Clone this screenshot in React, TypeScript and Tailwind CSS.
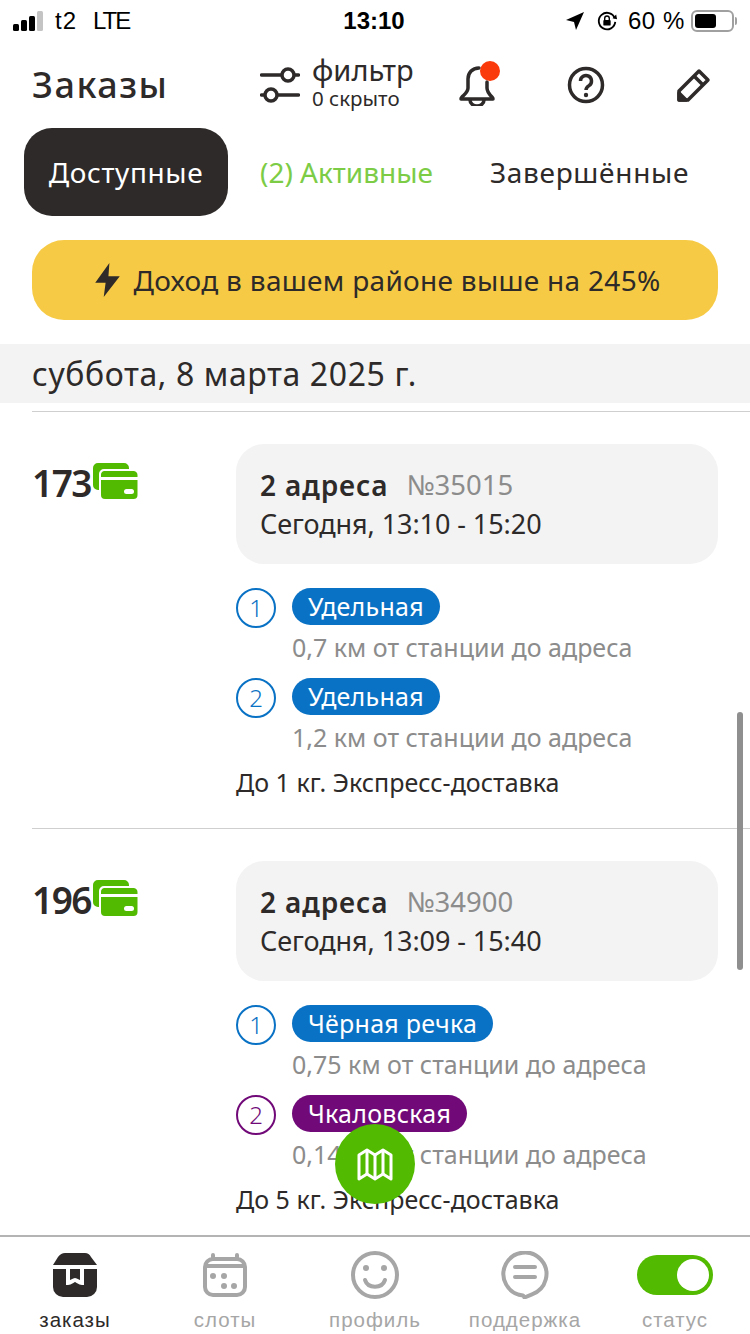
import React from "react";

const font = { fontFamily: '"Noto Sans", sans-serif' };

interface Stop {
  station: string;
  color: string;
  distance: string;
}

interface Order {
  price: string;
  addresses: string;
  id: string;
  time: string;
  stops: Stop[];
  note: string;
}

const BLUE = "#0a72c4";
const PURPLE = "#710a78";

const orders: Order[] = [
  {
    price: "173",
    addresses: "2 адреса",
    id: "№35015",
    time: "Сегодня, 13:10 - 15:20",
    stops: [
      { station: "Удельная", color: BLUE, distance: "0,7 км от станции до адреса" },
      { station: "Удельная", color: BLUE, distance: "1,2 км от станции до адреса" },
    ],
    note: "До 1 кг. Экспресс-доставка",
  },
  {
    price: "196",
    addresses: "2 адреса",
    id: "№34900",
    time: "Сегодня, 13:09 - 15:40",
    stops: [
      { station: "Чёрная речка", color: BLUE, distance: "0,75 км от станции до адреса" },
      { station: "Чкаловская", color: PURPLE, distance: "0,14 км от станции до адреса" },
    ],
    note: "До 5 кг. Экспресс-доставка",
  },
];

const CardsIcon = () => (
  <svg width="45" height="36" viewBox="0 0 45 36" className="shrink-0">
    <path d="M5 0h26a5 5 0 0 1 5 5v1H11a5 5 0 0 0-5 5v16H5a5 5 0 0 1-5-5V5a5 5 0 0 1 5-5z" fill="#52ba00" />
    <path d="M11 8h29a4 4 0 0 1 4.500 4v2H8v-2a4 4 0 0 1 3-4z" fill="#52ba00" />
    <path d="M8 17h36.500v15a4 4 0 0 1-4 4H12a4 4 0 0 1-4-4z" fill="#52ba00" />
    <rect x="31" y="26" width="10" height="5" rx="2.500" fill="#fff" />
  </svg>
);

const OrderRow = ({ order }: { order: Order }) => (
  <div className="flex h-[417px] border-t border-[#cfcfcf] ml-8 pt-8">
    <div className="w-[204px] shrink-0 flex items-start gap-[2px]">
      <span className="mt-[12px] text-[37px] leading-[54px] font-semibold text-[#2d2a29] tracking-[-1.5px]">{order.price}</span>
      <div className="mt-[19px]">
        <CardsIcon />
      </div>
    </div>
    <div className="w-[482px]">
      <div className="h-[120px] rounded-[28px] bg-[#f3f3f3] px-6 pt-[21px]">
        <div className="flex items-center gap-[18px] h-[40px]">
          <span className="text-[28px] tracking-[0.9px] font-semibold text-[#2d2a29]">{order.addresses}</span>
          <span className="text-[27.500px] text-[#8c8c8c]">{order.id}</span>
        </div>
        <div className="text-[27px] leading-[38px] text-[#2d2a29] tracking-[-0.07px]">{order.time}</div>
      </div>
      <div className="mt-6 flex flex-col gap-[18px]">
        {order.stops.map((stop, i) => (
          <div key={i} className="flex gap-4 h-[72px]">
            <div
              className="w-10 h-10 rounded-full border-[2.500px] flex items-center justify-center text-[24px] font-light"
              style={{ borderColor: stop.color, color: stop.color }}
            >
              {i + 1}
            </div>
            <div>
              <div
                className="inline-flex h-[37px] items-center rounded-full px-4 text-[25px] tracking-[0.25px] text-white"
                style={{ backgroundColor: stop.color }}
              >
                {stop.station}
              </div>
              <div className="text-[25px] leading-[33px] mt-[6px] text-[#8c8c8c] whitespace-nowrap">{stop.distance}</div>
            </div>
          </div>
        ))}
      </div>
      <div className="mt-[16px] text-[25px] leading-[33px] text-[#2d2a29] whitespace-nowrap">{order.note}</div>
    </div>
  </div>
);

const StatusBar = () => (
  <div className="h-[42px] shrink-0 flex items-center justify-between pl-[13px] pr-[13px] text-[24px] text-black" style={{ fontFamily: '"Liberation Sans", sans-serif' }}>
    <div className="flex items-center w-[260px]">
      <div className="flex items-end gap-[2px] h-[20px]">
        <span className="w-[6px] h-[7px] rounded-[1.500px] bg-black" />
        <span className="w-[6px] h-[11px] rounded-[1.500px] bg-black" />
        <span className="w-[6px] h-[15px] rounded-[1.500px] bg-black" />
        <span className="w-[6px] h-[20px] rounded-[1.500px] bg-[#c4c4c4]" />
      </div>
      <span className="ml-[12px] tracking-[1px]">t2</span>
      <span className="ml-[16px] tracking-[-2px]">LTE</span>
    </div>
    <span className="font-bold text-[24px] -ml-[2px]">13:10</span>
    <div className="flex items-center justify-end w-[260px]">
      <svg width="19" height="18" viewBox="0 0 19 18"><path d="M18 0 0 8l8 2 2 8z" fill="#000" /></svg>
      <svg width="22" height="22" viewBox="0 0 24 24" fill="none" className="ml-[11px]">
        <path d="M20.500 9A9 9 0 1 0 21 13" stroke="#000" strokeWidth="2" />
        <path d="m18 9 5 1-1-5z" fill="#000" />
        <rect x="8" y="11" width="8" height="6" rx="1" fill="#000" />
        <path d="M9.500 11V9a2.500 2.500 0 0 1 5 0v2" stroke="#000" strokeWidth="1.500" />
      </svg>
      <span className="ml-[10px] tracking-[0.6px]">60 %</span>
      <div className="ml-[6px] w-[43px] h-[22px] rounded-[6px] border-2 border-[#a0a0a0] p-[2px]">
        <div className="w-[21px] h-full rounded-[3px] bg-black" />
      </div>
      <span className="w-[2px] h-[8px] ml-[1px] rounded-r bg-[#a0a0a0]" />
    </div>
  </div>
);

const Header = () => (
  <div className="h-[86px] shrink-0 flex items-center pl-8 text-[#2d2a29]">
    <span className="text-[36px] font-medium w-[228px] tracking-[1.5px]">Заказы</span>
    <svg width="40" height="36" viewBox="0 0 40 36" fill="none" stroke="#2d2a29" strokeWidth="3.500">
      <path d="M1.500 8h37M1.500 28h37" strokeLinecap="round" />
      <circle cx="28" cy="8" r="6" fill="#fff" />
      <circle cx="11" cy="28" r="6" fill="#fff" />
    </svg>
    <div className="ml-[12px] w-[128px] -mt-[4px]">
      <div className="text-[29px] leading-[30px]">фильтр</div>
      <div className="text-[20.500px] leading-[26px]">0 скрыто</div>
    </div>
    <div className="ml-[18px] w-[40px] relative">
      <svg width="38" height="42" viewBox="0 0 38 42" fill="none" stroke="#2d2a29" strokeWidth="3.500" strokeLinecap="round" strokeLinejoin="round">
        <path d="M21 4C14 4 10 9 10 15v9c0 4-3 6-6 9-1 1-1 2-1 2h32s0-1-1-2c-3-3-5-5-5-9v-6" />
        <path d="M12 36a7 6 0 0 0 14 0" />
      </svg>
      <span className="absolute -top-[3px] left-[22px] w-[20px] h-[20px] rounded-full bg-[#fa3a0a]" />
    </div>
    <svg width="38" height="38" viewBox="0 0 38 38" fill="none" className="ml-[69px]">
      <circle cx="19" cy="19" r="16.500" stroke="#2d2a29" strokeWidth="3.500" />
      <path d="M13.500 15a5.500 5.500 0 1 1 8.500 4.600c-2 1.300-3 2.200-3 4.400" stroke="#2d2a29" strokeWidth="3.500" />
      <circle cx="19" cy="29" r="2.200" fill="#2d2a29" />
    </svg>
    <svg width="36" height="36" viewBox="0 0 36 36" fill="none" stroke="#2d2a29" strokeWidth="3.500" strokeLinejoin="round" className="ml-[71px]">
      <path d="M3 33v-9L23 4l9 9-20 20z" />
      <path d="m18 9 9 9" />
      <path d="M3 33v-7l7 7z" fill="#2d2a29" />
    </svg>
  </div>
);

const Tabs = () => (
  <div className="shrink-0 flex items-center h-[88px] pl-6 text-[28px]">
    <div className="w-[204px] h-[88px] rounded-[28px] bg-[#2d2a29] text-white flex items-center justify-center tracking-[0.6px]">Доступные</div>
    <span className="ml-8 text-[#7ccc46]">(2) Активные</span>
    <span className="ml-[57px] text-[#2d2a29] tracking-[0.7px]">Завершённые</span>
  </div>
);

const NavIcon = ({ name }: { name: string }) => {
  if (name === "orders")
    return (
      <svg width="44" height="44" viewBox="0 0 44 44">
        <path d="M12 0h20q4 0 6 4l6 8H0l5-8q3-4 7-4z" fill="#2d2a29" />
        <path d="M0 16h44v18a10 10 0 0 1-10 10H10A10 10 0 0 1 0 34z" fill="#2d2a29" />
        <path d="M15 16v14c3 0 5-3 7-3s4 3 7 3V16" stroke="#fff" strokeWidth="4" fill="none" />
      </svg>
    );
  if (name === "slots")
    return (
      <svg width="44" height="44" viewBox="0 0 44 44" fill="none" stroke="#a6a6a6" strokeWidth="4">
        <rect x="2" y="6" width="40" height="36" rx="8" />
        <path d="M2 13h40" />
        <path d="M10 2v4M34 2v4" strokeLinecap="round" />
        <g fill="#a6a6a6" stroke="none">
          <circle cx="10" cy="23" r="3" /><circle cx="21" cy="23" r="3" />
          <circle cx="21" cy="33" r="3" /><circle cx="31" cy="33" r="3" />
        </g>
      </svg>
    );
  if (name === "profile")
    return (
      <svg width="48" height="48" viewBox="0 0 48 48" fill="none" stroke="#a6a6a6" strokeWidth="4">
        <circle cx="24" cy="24" r="22" />
        <path d="M14 29c3 9 17 9 20 0" strokeLinecap="round" />
        <circle cx="15" cy="17" r="3" fill="#a6a6a6" stroke="none" />
        <circle cx="33" cy="17" r="3" fill="#a6a6a6" stroke="none" />
      </svg>
    );
  if (name === "support")
    return (
      <svg width="48" height="48" viewBox="0 0 48 48" fill="none" stroke="#a6a6a6" strokeWidth="4" strokeLinejoin="round">
        <path d="M22 44.400A21.500 21.500 0 1 1 31 43.300L23.500 46.500z" />
        <path d="M14 16h20M14 26h20" strokeLinecap="round" />
      </svg>
    );
  return (
    <div className="w-[76px] h-[40px] rounded-full bg-[#52ba00] flex items-center justify-end pr-[4px]">
      <span className="w-[32px] h-[32px] rounded-full bg-white" />
    </div>
  );
};

const navItems = [
  { name: "orders", label: "заказы", active: true },
  { name: "slots", label: "слоты", active: false },
  { name: "profile", label: "профиль", active: false },
  { name: "support", label: "поддержка", active: false },
  { name: "status", label: "статус", active: false },
];

const BottomNav = () => (
  <div className="h-[99px] shrink-0 border-t-2 border-[#b4b4b4] bg-white flex" style={{ fontFamily: '"Liberation Sans", sans-serif' }}>
    {navItems.map((item) => (
      <div key={item.name} className="w-[150px] flex flex-col items-center">
        <div className="h-[50px] mt-[13px] flex items-center justify-center">
          <NavIcon name={item.name} />
        </div>
        <span className={`mt-[8px] text-[20.500px] leading-[24px] tracking-[1px] ${item.active ? "text-[#2d2a29]" : "text-[#a6a6a6]"}`}>
          {item.label}
        </span>
      </div>
    ))}
  </div>
);

export default function App() {
  return (
    <div className="relative w-[750px] h-[1334px] overflow-hidden bg-white flex flex-col" style={font}>
      <StatusBar />
      <Header />
      <Tabs />
      <div className="shrink-0 mx-8 mt-6 h-[80px] rounded-[32px] bg-[#f7ca45] flex items-center justify-center gap-[13px] pl-[6px] text-[28px] tracking-[0.3px] text-[#2d2a29]">
        <svg width="25" height="34" viewBox="0 0 26 36"><path d="M15 0 0 21h11l-2 15 17-22H14z" fill="#2d2a29" /></svg>
        Доход в вашем районе выше на 245%
      </div>
      <div className="shrink-0 mt-6 h-[59px] bg-[#f3f3f3] pl-8 flex items-center text-[32px] tracking-[0.6px] text-[#2d2a29]">
        суббота, 8 марта 2025 г.
      </div>
      <div className="flex-1 overflow-hidden pt-2">
        {orders.map((o) => (
          <OrderRow key={o.id} order={o} />
        ))}
      </div>
      <BottomNav />
      <div className="absolute left-[737px] top-[712px] w-[6px] h-[258px] rounded-full bg-[#8f8f8f]" />
      <div className="absolute left-[335px] top-[1124px] w-[80px] h-[80px] rounded-full bg-[#52ba00] flex items-center justify-center">
        <svg width="36" height="33" viewBox="0 0 36 33" fill="none" stroke="#fff" strokeWidth="3" strokeLinejoin="round">
          <path d="M2 7 10 2l8 5 8-5 8 5v24l-8-5-8 5-8-5-8 5z" />
          <path d="M10 2v24M18 7v24M26 2v24" />
        </svg>
      </div>
    </div>
  );
}
